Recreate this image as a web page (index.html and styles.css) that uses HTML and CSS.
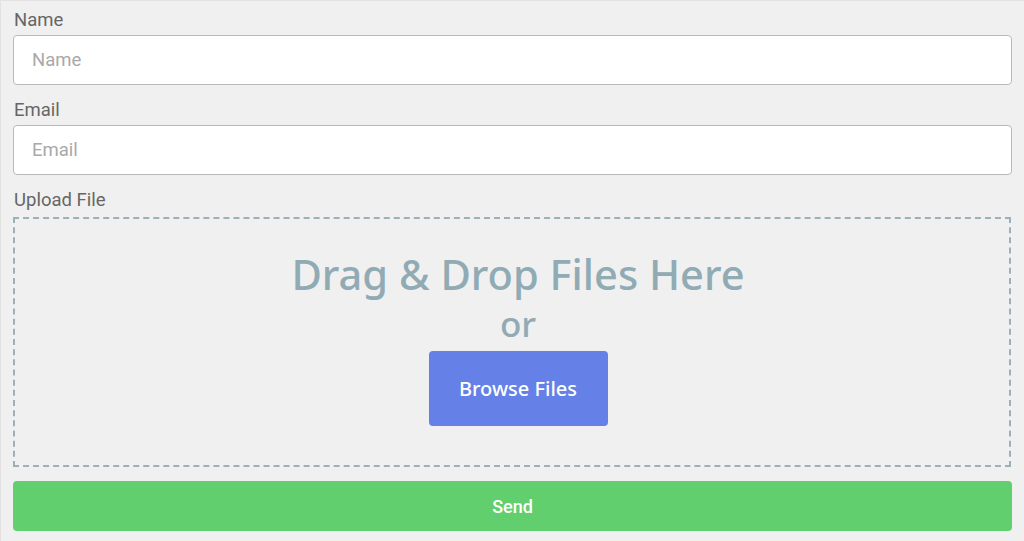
FILE: index.html
```html
<!DOCTYPE html>
<html>
<head>
<meta charset="utf-8">
<link rel="stylesheet" href="styles.css">
</head>
<body>
<form class="form">
  <label class="label">Name</label>
  <input class="input" type="text" placeholder="Name">
  <label class="label">Email</label>
  <input class="input" type="text" placeholder="Email">
  <label class="label label-upload">Upload File</label>
  <div class="dropzone">
    <div class="drop-title">Drag &amp; Drop Files Here</div>
    <div class="drop-or">or</div>
    <div class="browse">Browse Files</div>
  </div>
  <button class="send" type="button">Send</button>
</form>
</body>
</html>
```

FILE: styles.css
```css
html, body {
  margin: 0;
  padding: 0;
  height: 100%;
}
body {
  background: #f0f0f0;
  border-top: 1px solid #e2e2e2;
  border-left: 1px solid #e2e2e2;
  box-sizing: border-box;
  font-family: Roboto, "Liberation Sans", sans-serif;
}
.form {
  display: flex;
  flex-direction: column;
  padding: 9px 12px 0 12px;
}
.label {
  display: block;
  font-size: 18.5px;
  line-height: 20px;
  color: #666;
  margin: 0 0 5px 1px;
}
.input {
  box-sizing: border-box;
  height: 50px;
  width: 100%;
  border: 1px solid #b9b9b9;
  border-radius: 4px;
  background: #fff;
  padding: 0 18px;
  font-family: Roboto, "Liberation Sans", sans-serif;
  font-size: 18.5px;
  color: #333;
  margin-bottom: 15px;
  outline: none;
}
.input::placeholder {
  color: #a9a9a9;
}
.label-upload {
  margin-bottom: 7px;
}
.dropzone {
  box-sizing: border-box;
  height: 250px;
  width: calc(100% - 1px);
  border: 2px dashed #9db0b7;
  display: flex;
  flex-direction: column;
  align-items: center;
  padding-top: 30px;
  padding-left: 12px;
  font-family: "Noto Sans", "Open Sans", sans-serif;
}
.drop-title {
  font-size: 41.6px;
  line-height: 50px;
  font-weight: 500;
  color: #91abb5;
}
.drop-or {
  font-size: 35px;
  line-height: 40px;
  font-weight: 500;
  color: #91abb5;
  margin-top: 5px;
}
.browse {
  margin-top: 7px;
  width: 179px;
  height: 75px;
  box-sizing: border-box;
  background: #6581e7;
  border-radius: 4px;
  color: #fff;
  font-size: 20px;
  font-weight: 500;
  display: flex;
  align-items: center;
  justify-content: center;
}
.send {
  margin-top: 14px;
  height: 50px;
  width: 100%;
  border: none;
  border-radius: 4px;
  background: #62cf6f;
  color: #fff;
  font-family: Roboto, "Liberation Sans", sans-serif;
  font-weight: 500;
  font-size: 18px;
}
```
